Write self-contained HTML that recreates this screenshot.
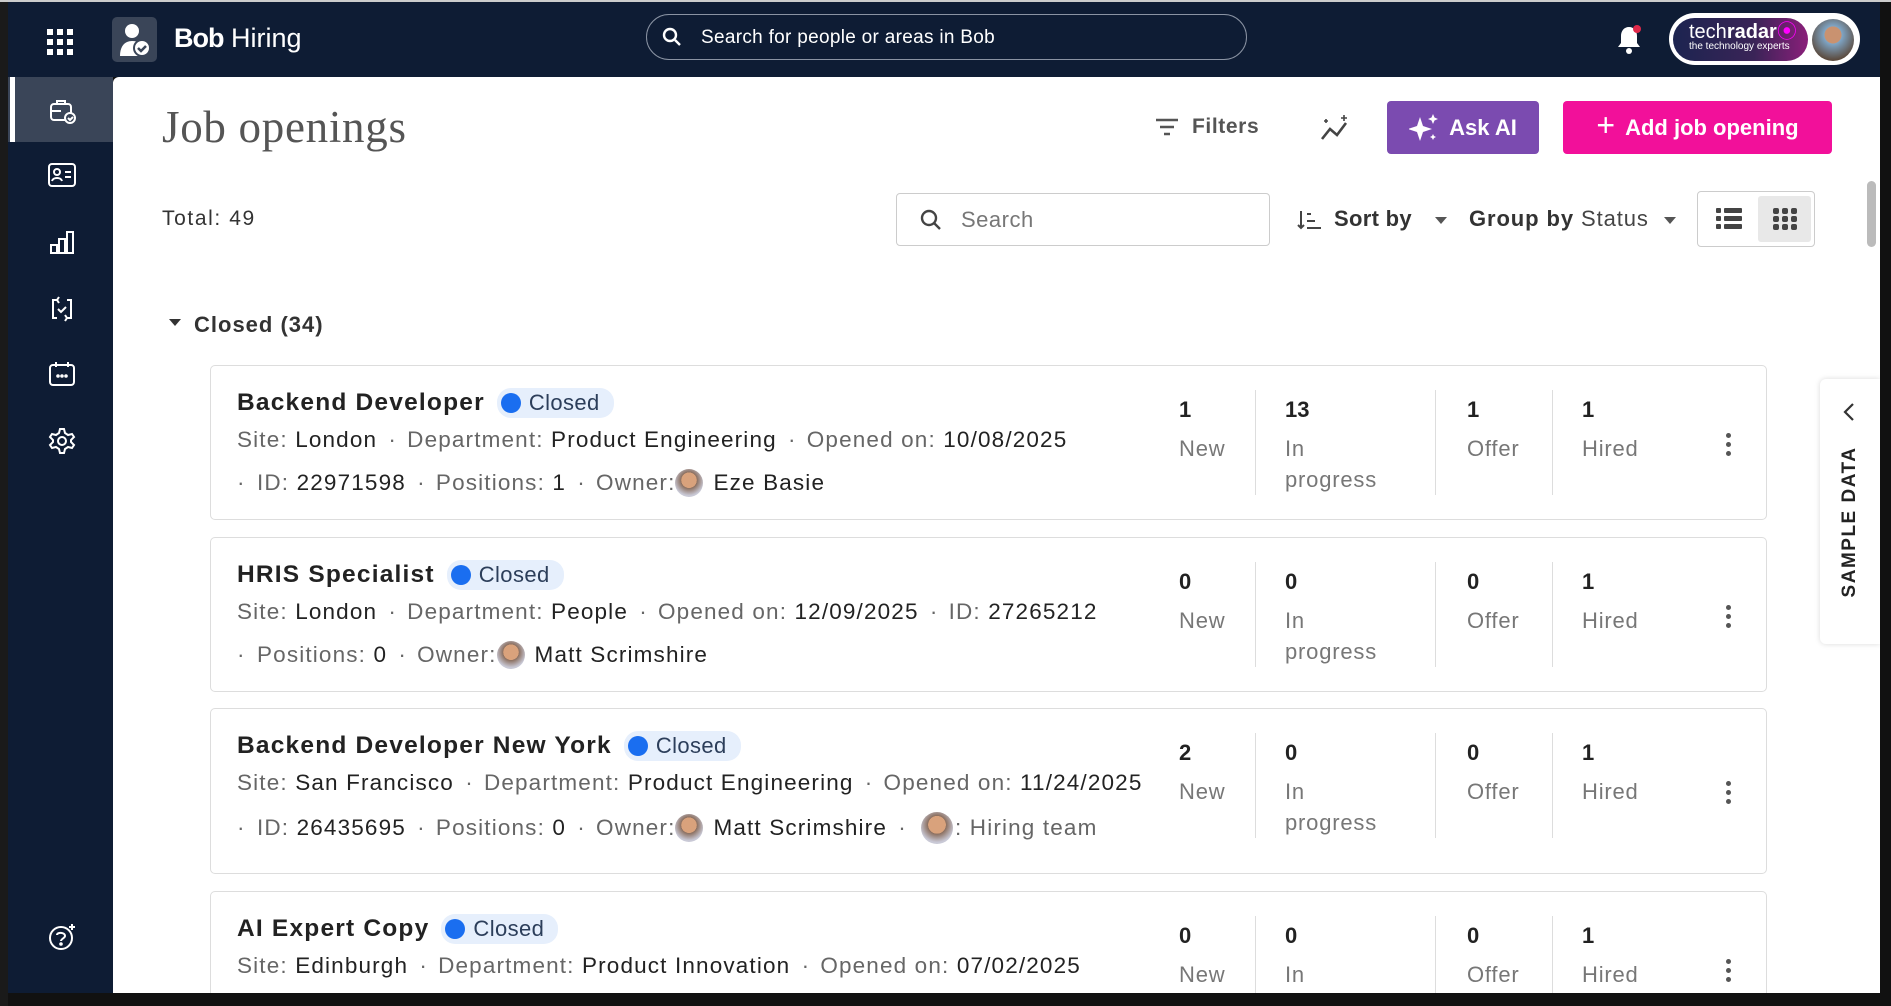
<!DOCTYPE html>
<html><head><meta charset="utf-8"><style>
*{box-sizing:border-box;margin:0;padding:0}
html,body{width:1891px;height:1006px;overflow:hidden}
body{background:#111;font-family:"Liberation Sans",sans-serif;position:relative}
.a{position:absolute}
.top{left:8px;top:2px;width:1883px;height:75px;background:#0e1c34}
.nav{left:8px;top:77px;width:105px;height:918px;background:#0e1c34}
.main{left:113px;top:77px;width:1767px;height:916px;background:#fff;border-top-left-radius:6px}
.btn{position:absolute;top:101px;height:53px;border-radius:4px;color:#fff;font-weight:bold;font-size:22px;display:flex;align-items:center;justify-content:center;gap:10px}
.card{position:absolute;left:210px;width:1557px;border:1px solid #ddd;border-radius:5px;background:#fff}
.t{position:absolute;left:26px;font-size:24.5px;letter-spacing:1.2px;font-weight:bold;color:#222;display:flex;align-items:center;white-space:nowrap}
.pill{display:inline-flex;align-items:center;margin-left:12px;background:#e6effc;border-radius:14px;height:30px;padding:0 14px 0 4px;font-weight:normal;color:#2c3e5a;font-size:22px;letter-spacing:.4px}
.pill:before{content:"";width:20px;height:20px;border-radius:50%;background:#1a6ef0;margin-right:8px}
.m{position:absolute;left:26px;font-size:22.5px;letter-spacing:1.15px;color:#666;white-space:nowrap;display:flex;align-items:center}
.m b{font-weight:normal;color:#222}
.m s{text-decoration:none;display:inline-block;width:30px;text-align:center;letter-spacing:0}
.m s.f{width:20px;text-align:left}
.av{display:inline-block;width:28px;height:28px;border-radius:50%;background:radial-gradient(circle at 50% 40%,#d9a27c 35%,#8a6e5e 36%,#c9c9d6 70%);margin:0 10px 0 0}
.num{position:absolute;font-size:22px;font-weight:bold;color:#222}
.lbl{position:absolute;font-size:22px;letter-spacing:.8px;color:#777;line-height:31px}
.div{position:absolute;width:1px;background:#ddd}
.keb{position:absolute;left:1515px;width:6px}
.keb i{display:block;width:5px;height:5px;border-radius:50%;background:#555;margin-bottom:4px}
</style></head><body>
<div class="a top"></div>
<div class="a nav"></div>
<div class="a" style="left:8px;top:77px;width:105px;height:65px;background:#3a4558"></div>
<div class="a" style="left:10px;top:77px;width:5px;height:65px;background:#fff"></div>
<svg class="a" style="left:47px;top:29px" width="26" height="26" viewBox="0 0 26 26" fill="#fff"><rect x="0" y="0" width="6" height="6"/><rect x="10" y="0" width="6" height="6"/><rect x="20" y="0" width="6" height="6"/><rect x="0" y="10" width="6" height="6"/><rect x="10" y="10" width="6" height="6"/><rect x="20" y="10" width="6" height="6"/><rect x="0" y="20" width="6" height="6"/><rect x="10" y="20" width="6" height="6"/><rect x="20" y="20" width="6" height="6"/></svg>
<div class="a" style="left:112px;top:17px;width:45px;height:45px;background:#3a4558;border-radius:5px"></div>
<svg class="a" style="left:116px;top:20px" width="38" height="38" viewBox="0 0 38 38"><circle cx="16" cy="11" r="7" fill="#fff"/><path d="M4 36c0-10 5-15 12-15s9 3 10 6v9z" fill="#fff"/><circle cx="26" cy="28" r="8" fill="#fff" stroke="#3a4558" stroke-width="2"/><path d="M22 28l3 3 5-5" stroke="#3a4558" stroke-width="2.5" fill="none"/></svg>
<div class="a" style="left:174px;top:23px;color:#fff;font-size:27px"><b style="letter-spacing:-1px">Bob</b> Hiring</div>
<div class="a" style="left:646px;top:14px;width:601px;height:46px;border:1px solid #8a93a3;border-radius:23px"></div>
<svg class="a" style="left:662px;top:27px" width="20" height="20" viewBox="0 0 20 20" fill="none" stroke="#fff" stroke-width="2.4"><circle cx="8" cy="8" r="6"/><path d="M13 13l5 5"/></svg>
<div class="a" style="left:701px;top:27px;color:#fff;font-size:19px;letter-spacing:.3px">Search for people or areas in Bob</div>
<svg class="a" style="left:1616px;top:25px" width="26" height="30" viewBox="0 0 26 30"><path d="M13 2c-5 0-8 4-8 9v7l-3 4h22l-3-4v-7c0-5-3-9-8-9z" fill="#fff"/><circle cx="13" cy="26" r="3" fill="#fff"/><circle cx="21" cy="4" r="4" fill="#e0294a"/></svg>
<div class="a" style="left:1669px;top:13px;width:191px;height:52px;border-radius:26px;background:#fff"></div>
<div class="a" style="left:1673px;top:18px;width:135px;height:43px;border-radius:22px;background:linear-gradient(90deg,#1c2450,#3a2457 60%,#8a1f7a);color:#fff;padding:5px 0 0 16px;font-size:20px;line-height:18px">tech<b>radar</b><span style="color:#f0f">⦿</span><div style="font-size:10px;line-height:12px">the technology experts</div></div>
<div class="a" style="left:1812px;top:19px;width:42px;height:42px;border-radius:50%;background:radial-gradient(circle at 50% 38%,#c99270 25%,#7fa6c7 26%,#5b4a3d 75%)"></div>
<svg class="a" style="left:49px;top:97px" width="28" height="28" viewBox="0 0 28 28" fill="none" stroke="#fff" stroke-width="2"><rect x="2" y="7" width="20" height="16" rx="3"/><path d="M8 7V4h8v3M2 14h10"/><circle cx="21" cy="21" r="5" fill="#3a4558"/><path d="M19 21l2 2 3-3"/></svg>
<svg class="a" style="left:48px;top:163px" width="28" height="24" viewBox="0 0 28 24" fill="none" stroke="#fff" stroke-width="2"><rect x="1" y="1" width="26" height="22" rx="3"/><circle cx="9" cy="9" r="3"/><path d="M4 18c1-4 9-4 10 0M17 9h6M17 14h6"/></svg>
<svg class="a" style="left:50px;top:230px" width="24" height="24" viewBox="0 0 24 24" fill="none" stroke="#fff" stroke-width="2"><rect x="1" y="15" width="6" height="8"/><rect x="9" y="9" width="6" height="14"/><rect x="17" y="2" width="6" height="21"/></svg>
<svg class="a" style="left:49px;top:295px" width="26" height="28" viewBox="0 0 26 28" fill="none" stroke="#fff" stroke-width="2"><path d="M8 5H4v18h4M18 5h4v18h-4M9 14l3 3 5-5M10 2l-2 3 2 3M16 20l2 3-2 3"/></svg>
<svg class="a" style="left:48px;top:361px" width="28" height="26" viewBox="0 0 28 26" fill="none" stroke="#fff" stroke-width="2"><rect x="2" y="4" width="24" height="20" rx="3"/><path d="M8 1v5M20 1v5"/><circle cx="10" cy="15" r=".8" fill="#fff"/><circle cx="14" cy="15" r=".8" fill="#fff"/><circle cx="18" cy="15" r=".8" fill="#fff"/></svg>
<svg class="a" style="left:48px;top:427px" width="28" height="28" viewBox="0 0 28 28" fill="none" stroke="#fff" stroke-width="2"><circle cx="14" cy="14" r="4"/><path d="M12 2h4l1 4 3 2 4-1 2 3-3 3v2l3 3-2 3-4-1-3 2-1 4h-4l-1-4-3-2-4 1-2-3 3-3v-2l-3-3 2-3 4 1 3-2z"/></svg>
<svg class="a" style="left:47px;top:922px" width="30" height="30" viewBox="0 0 30 30" fill="none" stroke="#fff" stroke-width="2"><circle cx="14" cy="16" r="11"/><path d="M10 13c0-3 8-3 8 1 0 2-4 3-4 5"/><circle cx="14" cy="22" r=".8" fill="#fff"/><path d="M25 2v6M22 5h6"/></svg>
<div class="a main"></div>
<div class="a" style="left:162px;top:101px;font-family:'Liberation Serif',serif;font-size:45px;letter-spacing:.7px;color:#555">Job openings</div>
<svg class="a" style="left:1155px;top:118px" width="24" height="18" viewBox="0 0 24 18" stroke="#555" stroke-width="2.4"><path d="M1 2h22M5 9h14M9 16h6"/></svg>
<div class="a" style="left:1192px;top:115px;font-size:21px;letter-spacing:.6px;font-weight:bold;color:#555">Filters</div>
<svg class="a" style="left:1318px;top:113px" width="36" height="30" viewBox="0 0 36 30" fill="none" stroke="#444" stroke-width="2.6"><path d="M4 26l8-10 7 6 9-12"/><path d="M26 2v6M23 5h6M8 6v4M6 8h4" stroke-width="1.6"/></svg>
<div class="btn" style="left:1387px;width:152px;background:#7b4bb0"><svg width="30" height="30" viewBox="0 0 30 30" fill="#fff"><path d="M11 4l3 9 9 3-9 3-3 9-3-9-9-3 9-3z"/><path d="M24 1l1.5 3.5L29 6l-3.5 1.5L24 11l-1.5-3.5L19 6l3.5-1.5z"/><path d="M24 21l1 2 2 1-2 1-1 2-1-2-2-1 2-1z"/></svg>Ask AI</div>
<div class="btn" style="left:1563px;width:269px;background:#f2109a"><span style="font-size:32px;font-weight:normal;margin-top:-4px">+</span>Add job opening</div>
<div class="a" style="left:162px;top:207px;font-size:21px;letter-spacing:1.6px;color:#333">Total: 49</div>
<div class="a" style="left:896px;top:193px;width:374px;height:53px;border:1px solid #ccc;border-radius:4px"></div>
<svg class="a" style="left:920px;top:209px" width="22" height="22" viewBox="0 0 22 22" fill="none" stroke="#444" stroke-width="2.4"><circle cx="9" cy="9" r="7"/><path d="M14 14l6 6"/></svg>
<div class="a" style="left:961px;top:207px;font-size:22px;letter-spacing:.5px;color:#777">Search</div>
<svg class="a" style="left:1297px;top:210px" width="26" height="20" viewBox="0 0 26 20" stroke="#444" stroke-width="2" fill="none"><path d="M4 1v17M1 15l3 3 3-3M10 4h4M10 11h8M10 18h14"/></svg>
<div class="a" style="left:1334px;top:206px;font-size:22px;letter-spacing:.3px;font-weight:bold;color:#333">Sort by</div>
<div class="a" style="left:1435px;top:217px;border:6px solid transparent;border-top:7px solid #555"></div>
<div class="a" style="left:1469px;top:206px;font-size:22px;letter-spacing:.9px;color:#444"><b style="color:#333">Group by</b> Status</div>
<div class="a" style="left:1664px;top:217px;border:6px solid transparent;border-top:7px solid #555"></div>
<div class="a" style="left:1697px;top:191px;width:118px;height:56px;border:1px solid #ccc;border-radius:4px"></div>
<div class="a" style="left:1758px;top:196px;width:53px;height:46px;background:#e8e8e8;border-radius:3px"></div>
<svg class="a" style="left:1716px;top:208px" width="26" height="22" viewBox="0 0 26 22" fill="#444"><rect x="0" y="0" width="5" height="5" rx="1"/><rect x="8" y="0" width="18" height="5" rx="1"/><rect x="0" y="8" width="5" height="5" rx="1"/><rect x="8" y="8" width="18" height="5" rx="1"/><rect x="0" y="16" width="5" height="5" rx="1"/><rect x="8" y="16" width="18" height="5" rx="1"/></svg>
<svg class="a" style="left:1773px;top:208px" width="24" height="22" viewBox="0 0 24 22" fill="#444"><rect x="0" y="0" width="6" height="6" rx="2"/><rect x="9" y="0" width="6" height="6" rx="2"/><rect x="18" y="0" width="6" height="6" rx="2"/><rect x="0" y="8" width="6" height="6" rx="2"/><rect x="9" y="8" width="6" height="6" rx="2"/><rect x="18" y="8" width="6" height="6" rx="2"/><rect x="0" y="16" width="6" height="6" rx="2"/><rect x="9" y="16" width="6" height="6" rx="2"/><rect x="18" y="16" width="6" height="6" rx="2"/></svg>
<div class="a" style="left:1867px;top:181px;width:9px;height:66px;background:#bbb;border-radius:5px"></div>
<div class="a" style="left:169px;top:319px;border:6px solid transparent;border-top:7px solid #333"></div>
<div class="a" style="left:194px;top:312px;font-size:22px;letter-spacing:1px;font-weight:bold;color:#333">Closed (34)</div>
<div class="a" style="left:1820px;top:379px;width:60px;height:265px;background:#fff;border-radius:6px 0 0 6px;box-shadow:0 0 6px rgba(0,0,0,.15)"></div>
<svg class="a" style="left:1842px;top:402px" width="14" height="20" viewBox="0 0 14 20" fill="none" stroke="#333" stroke-width="2.2"><path d="M11 2L3 10l8 8"/></svg>
<div class="a" style="left:1725px;top:511px;width:250px;transform:rotate(-90deg);text-align:center;font-size:19px;font-weight:bold;color:#222;letter-spacing:1.5px;white-space:nowrap">SAMPLE DATA</div>

<div class="card" style="top:365px;height:155px">
<div class="t" style="top:22px">Backend Developer<span class="pill">Closed</span></div>
<div class="m" style="top:61px">Site:&nbsp;<b>London</b><s>·</s>Department:&nbsp;<b>Product Engineering</b><s>·</s>Opened on:&nbsp;<b>10/08/2025</b></div>
<div class="m" style="top:103px"><s class="f">·</s>ID:&nbsp;<b>22971598</b><s>·</s>Positions:&nbsp;<b>1</b><s>·</s>Owner:<span class="av"></span><b>Eze Basie</b></div>
<div class="num" style="left:968px;top:31px">1</div><div class="lbl" style="left:968px;top:67px">New</div>
<div class="div" style="left:1044px;top:24px;height:105px"></div>
<div class="num" style="left:1074px;top:31px">13</div><div class="lbl" style="left:1074px;top:67px">In<br>progress</div>
<div class="div" style="left:1224px;top:24px;height:105px"></div>
<div class="num" style="left:1256px;top:31px">1</div><div class="lbl" style="left:1256px;top:67px">Offer</div>
<div class="div" style="left:1341px;top:24px;height:105px"></div>
<div class="num" style="left:1371px;top:31px">1</div><div class="lbl" style="left:1371px;top:67px">Hired</div>
<div class="keb" style="top:67px"><i></i><i></i><i></i></div>
</div>
<div class="card" style="top:537px;height:155px">
<div class="t" style="top:22px">HRIS Specialist<span class="pill">Closed</span></div>
<div class="m" style="top:61px">Site:&nbsp;<b>London</b><s>·</s>Department:&nbsp;<b>People</b><s>·</s>Opened on:&nbsp;<b>12/09/2025</b><s>·</s>ID:&nbsp;<b>27265212</b></div>
<div class="m" style="top:103px"><s class="f">·</s>Positions:&nbsp;<b>0</b><s>·</s>Owner:<span class="av"></span><b>Matt Scrimshire</b></div>
<div class="num" style="left:968px;top:31px">0</div><div class="lbl" style="left:968px;top:67px">New</div>
<div class="div" style="left:1044px;top:24px;height:105px"></div>
<div class="num" style="left:1074px;top:31px">0</div><div class="lbl" style="left:1074px;top:67px">In<br>progress</div>
<div class="div" style="left:1224px;top:24px;height:105px"></div>
<div class="num" style="left:1256px;top:31px">0</div><div class="lbl" style="left:1256px;top:67px">Offer</div>
<div class="div" style="left:1341px;top:24px;height:105px"></div>
<div class="num" style="left:1371px;top:31px">1</div><div class="lbl" style="left:1371px;top:67px">Hired</div>
<div class="keb" style="top:67px"><i></i><i></i><i></i></div>
</div>
<div class="card" style="top:708px;height:166px">
<div class="t" style="top:22px">Backend Developer New York<span class="pill">Closed</span></div>
<div class="m" style="top:61px">Site:&nbsp;<b>San Francisco</b><s>·</s>Department:&nbsp;<b>Product Engineering</b><s>·</s>Opened on:&nbsp;<b>11/24/2025</b></div>
<div class="m" style="top:103px"><s class="f">·</s>ID:&nbsp;<b>26435695</b><s>·</s>Positions:&nbsp;<b>0</b><s>·</s>Owner:<span class="av"></span><b>Matt Scrimshire</b><s>·</s><span class="av" style="width:32px;height:32px;margin:0 2px 0 4px"></span>: Hiring team</div>
<div class="num" style="left:968px;top:31px">2</div><div class="lbl" style="left:968px;top:67px">New</div>
<div class="div" style="left:1044px;top:24px;height:105px"></div>
<div class="num" style="left:1074px;top:31px">0</div><div class="lbl" style="left:1074px;top:67px">In<br>progress</div>
<div class="div" style="left:1224px;top:24px;height:105px"></div>
<div class="num" style="left:1256px;top:31px">0</div><div class="lbl" style="left:1256px;top:67px">Offer</div>
<div class="div" style="left:1341px;top:24px;height:105px"></div>
<div class="num" style="left:1371px;top:31px">1</div><div class="lbl" style="left:1371px;top:67px">Hired</div>
<div class="keb" style="top:72px"><i></i><i></i><i></i></div>
</div>
<div class="card" style="top:891px;height:110px;border-bottom:none">
<div class="t" style="top:22px">AI Expert Copy<span class="pill">Closed</span></div>
<div class="m" style="top:61px">Site:&nbsp;<b>Edinburgh</b><s>·</s>Department:&nbsp;<b>Product Innovation</b><s>·</s>Opened on:&nbsp;<b>07/02/2025</b></div>
<div class="num" style="left:968px;top:31px">0</div><div class="lbl" style="left:968px;top:67px">New</div>
<div class="div" style="left:1044px;top:24px;height:86px"></div>
<div class="num" style="left:1074px;top:31px">0</div><div class="lbl" style="left:1074px;top:67px">In</div>
<div class="div" style="left:1224px;top:24px;height:86px"></div>
<div class="num" style="left:1256px;top:31px">0</div><div class="lbl" style="left:1256px;top:67px">Offer</div>
<div class="div" style="left:1341px;top:24px;height:86px"></div>
<div class="num" style="left:1371px;top:31px">1</div><div class="lbl" style="left:1371px;top:67px">Hired</div>
<div class="keb" style="top:67px"><i></i><i></i><i></i></div>
</div>
<div class="a" style="left:0;top:993px;width:1891px;height:13px;background:#111"></div>
<div class="a" style="left:1880px;top:0;width:11px;height:1006px;background:#111"></div>
<div class="a" style="left:0;top:0;width:8px;height:1006px;background:#1a1a1a"></div>
<div class="a" style="left:0;top:0;width:1891px;height:2px;background:#ccc"></div>
</body></html>
